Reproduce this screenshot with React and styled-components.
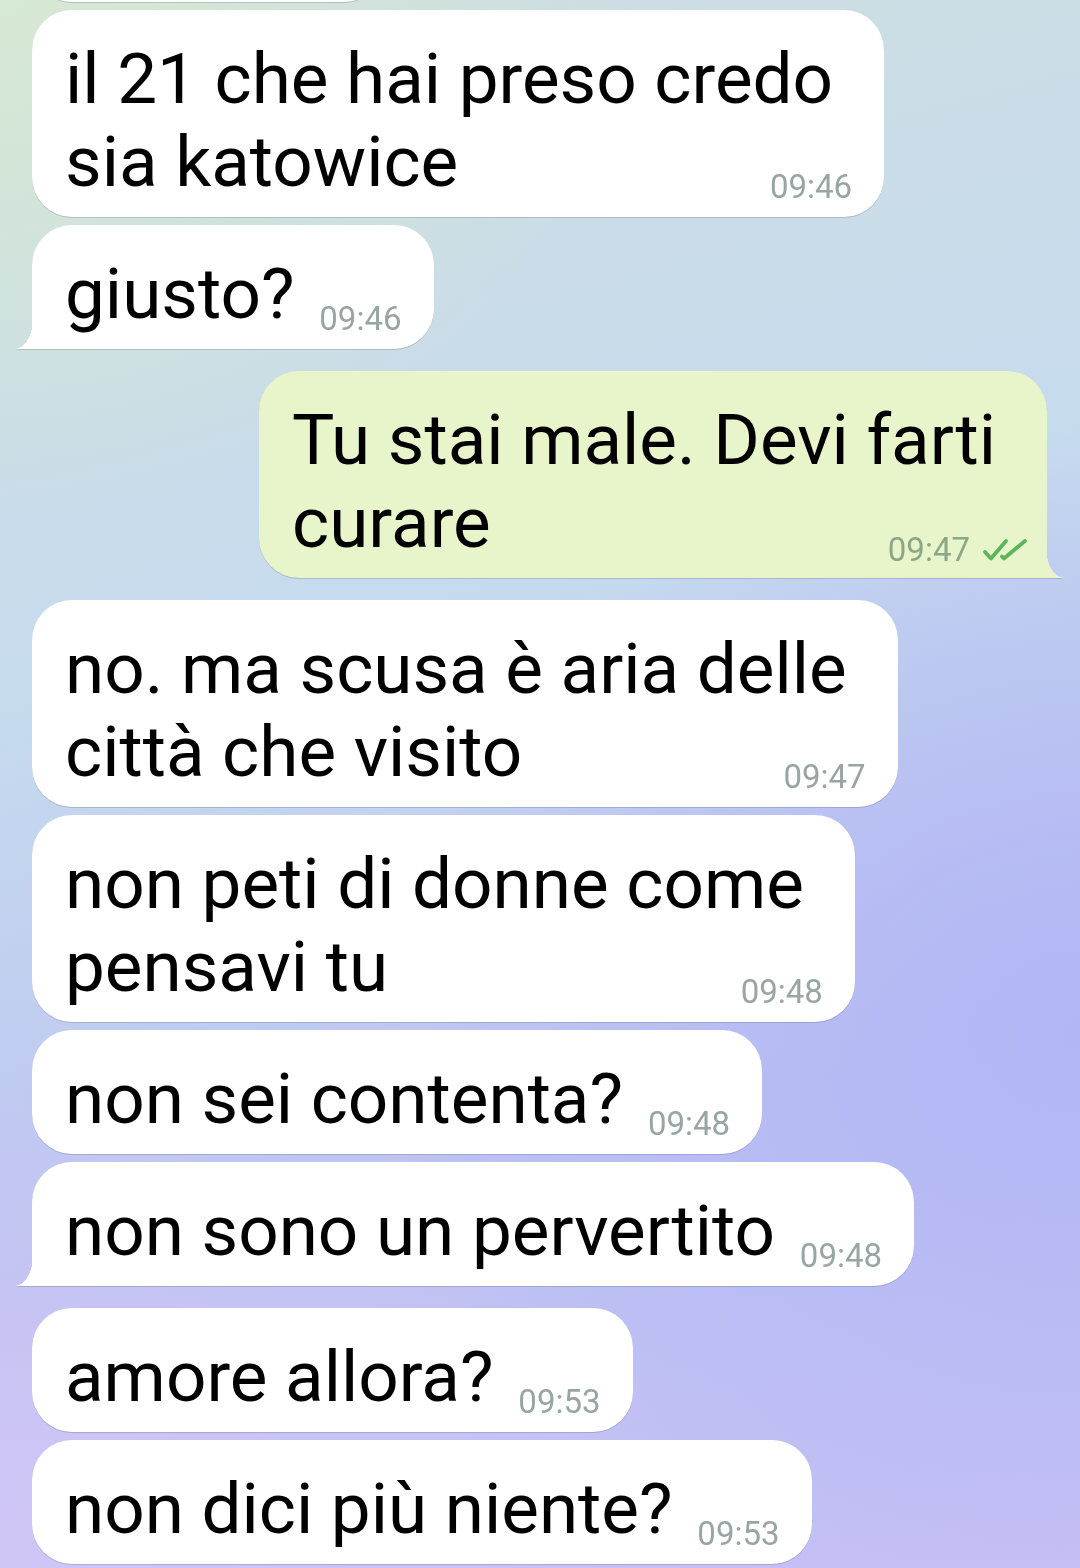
import React from 'react';
import styled, { createGlobalStyle } from 'styled-components';

const GlobalStyle = createGlobalStyle`
  html, body {
    margin: 0;
    padding: 0;
  }
  body {
    font-family: Roboto, 'Noto Sans', 'Liberation Sans', sans-serif;
  }
`;

const Screen = styled.div`
  width: 1080px;
  height: 1568px;
  overflow: hidden;
  background:
    radial-gradient(ellipse 620px 520px at 0% 0%, #d6e9d3 0%, rgba(214, 233, 211, 0) 100%),
    radial-gradient(ellipse 700px 600px at 100% 66%, #b2b6f5 0%, rgba(178, 182, 245, 0) 100%),
    radial-gradient(ellipse 700px 500px at 0% 100%, #d0c6f6 0%, rgba(208, 198, 246, 0) 100%),
    linear-gradient(165deg, #cfdedf 0%, #c6dbee 38%, #bcc2f2 70%, #c6c0f5 100%);
`;

const Feed = styled.div`
  display: flex;
  flex-direction: column;
  gap: 8px;
`;

const Row = styled.div`
  display: flex;
  justify-content: ${(p) => (p.$out ? 'flex-end' : 'flex-start')};
  padding: 0 33px 0 32px;
  margin-top: ${(p) => (p.$groupStart ? '14px' : '0')};

  &:first-child {
    margin-top: -122px;
  }
`;

const Bubble = styled.div`
  position: relative;
  box-sizing: border-box;
  min-width: ${(p) => p.$minWidth || 0}px;
  min-height: 124px;
  padding: 27px 51px 14px ${(p) => (p.$out ? 33 : 33)}px;
  border-radius: 40px;
  background: ${(p) => (p.$out ? '#e8f4c9' : '#ffffff')};
  color: #000;
  font-size: 71px;
  line-height: 83px;
  white-space: pre-line;
  filter: drop-shadow(0 1.5px 0.6px rgba(60, 70, 90, 0.22));
  ${(p) =>
    p.$tail &&
    (p.$out ? 'border-bottom-right-radius: 0;' : 'border-bottom-left-radius: 0;')}

  &::after {
    content: '';
    display: ${(p) => (p.$tail ? 'block' : 'none')};
    position: absolute;
    bottom: 0;
    ${(p) => (p.$out ? 'right: -17px;' : 'left: -17px;')}
    width: 18px;
    height: 30px;
    background: inherit;
    -webkit-mask: radial-gradient(
      ellipse 18px 30px at ${(p) => (p.$out ? '100% 0' : '0 0')},
      transparent 98%,
      #000 100%
    );
    mask: radial-gradient(
      ellipse 18px 30px at ${(p) => (p.$out ? '100% 0' : '0 0')},
      transparent 98%,
      #000 100%
    );
  }
`;

const Spacer = styled.span`
  display: inline-block;
  width: ${(p) => p.$w}px;
`;

const Meta = styled.div`
  position: absolute;
  right: ${(p) => (p.$out ? '19px' : '32px')};
  bottom: ${(p) => (p.$out ? '12px' : '14px')};
  display: flex;
  align-items: center;
  gap: 12px;
  font-size: 33px;
  line-height: 33px;
  color: ${(p) => (p.$out ? '#8aa787' : '#98a6a3')};
`;

const Checks = () => (
  <svg width="46" height="24" viewBox="0 0 46 24" fill="none">
    <path
      d="M3 14 L9 20.5 L24 3"
      stroke="#5cb55b"
      strokeWidth="3.8"
      strokeLinecap="round"
      strokeLinejoin="round"
    />
    <path
      d="M20 18.5 L22 20.5 L43 3"
      stroke="#5cb55b"
      strokeWidth="3.8"
      strokeLinecap="round"
      strokeLinejoin="round"
    />
  </svg>
);

const messages = [
  { text: '', time: '', hidden: true, width: 352 },
  { text: 'il 21 che hai preso credo\nsia katowice', time: '09:46' },
  { text: 'giusto?', time: '09:46', tail: true },
  { text: 'Tu stai male. Devi farti\ncurare', time: '09:47', out: true, tail: true, groupStart: true },
  { text: 'no. ma scusa è aria delle\ncittà che visito', time: '09:47', groupStart: true },
  { text: 'non peti di donne come\npensavi tu', time: '09:48' },
  { text: 'non sei contenta?', time: '09:48' },
  { text: 'non sono un pervertito', time: '09:48', tail: true },
  { text: 'amore allora?', time: '09:53', groupStart: true },
  { text: 'non dici più niente?', time: '09:53' },
];

export default function App() {
  return (
    <>
      <GlobalStyle />
      <Screen>
        <Feed>
          {messages.map((m, i) => (
            <Row key={i} $out={m.out} $groupStart={m.groupStart}>
              <Bubble $out={m.out} $tail={m.tail} $minWidth={m.width}>
                {m.text}
                {!m.hidden && <Spacer $w={m.out ? 140 : 88} />}
                {!m.hidden && (
                  <Meta $out={m.out}>
                    <span>{m.time}</span>
                    {m.out && <Checks />}
                  </Meta>
                )}
              </Bubble>
            </Row>
          ))}
        </Feed>
      </Screen>
    </>
  );
}
